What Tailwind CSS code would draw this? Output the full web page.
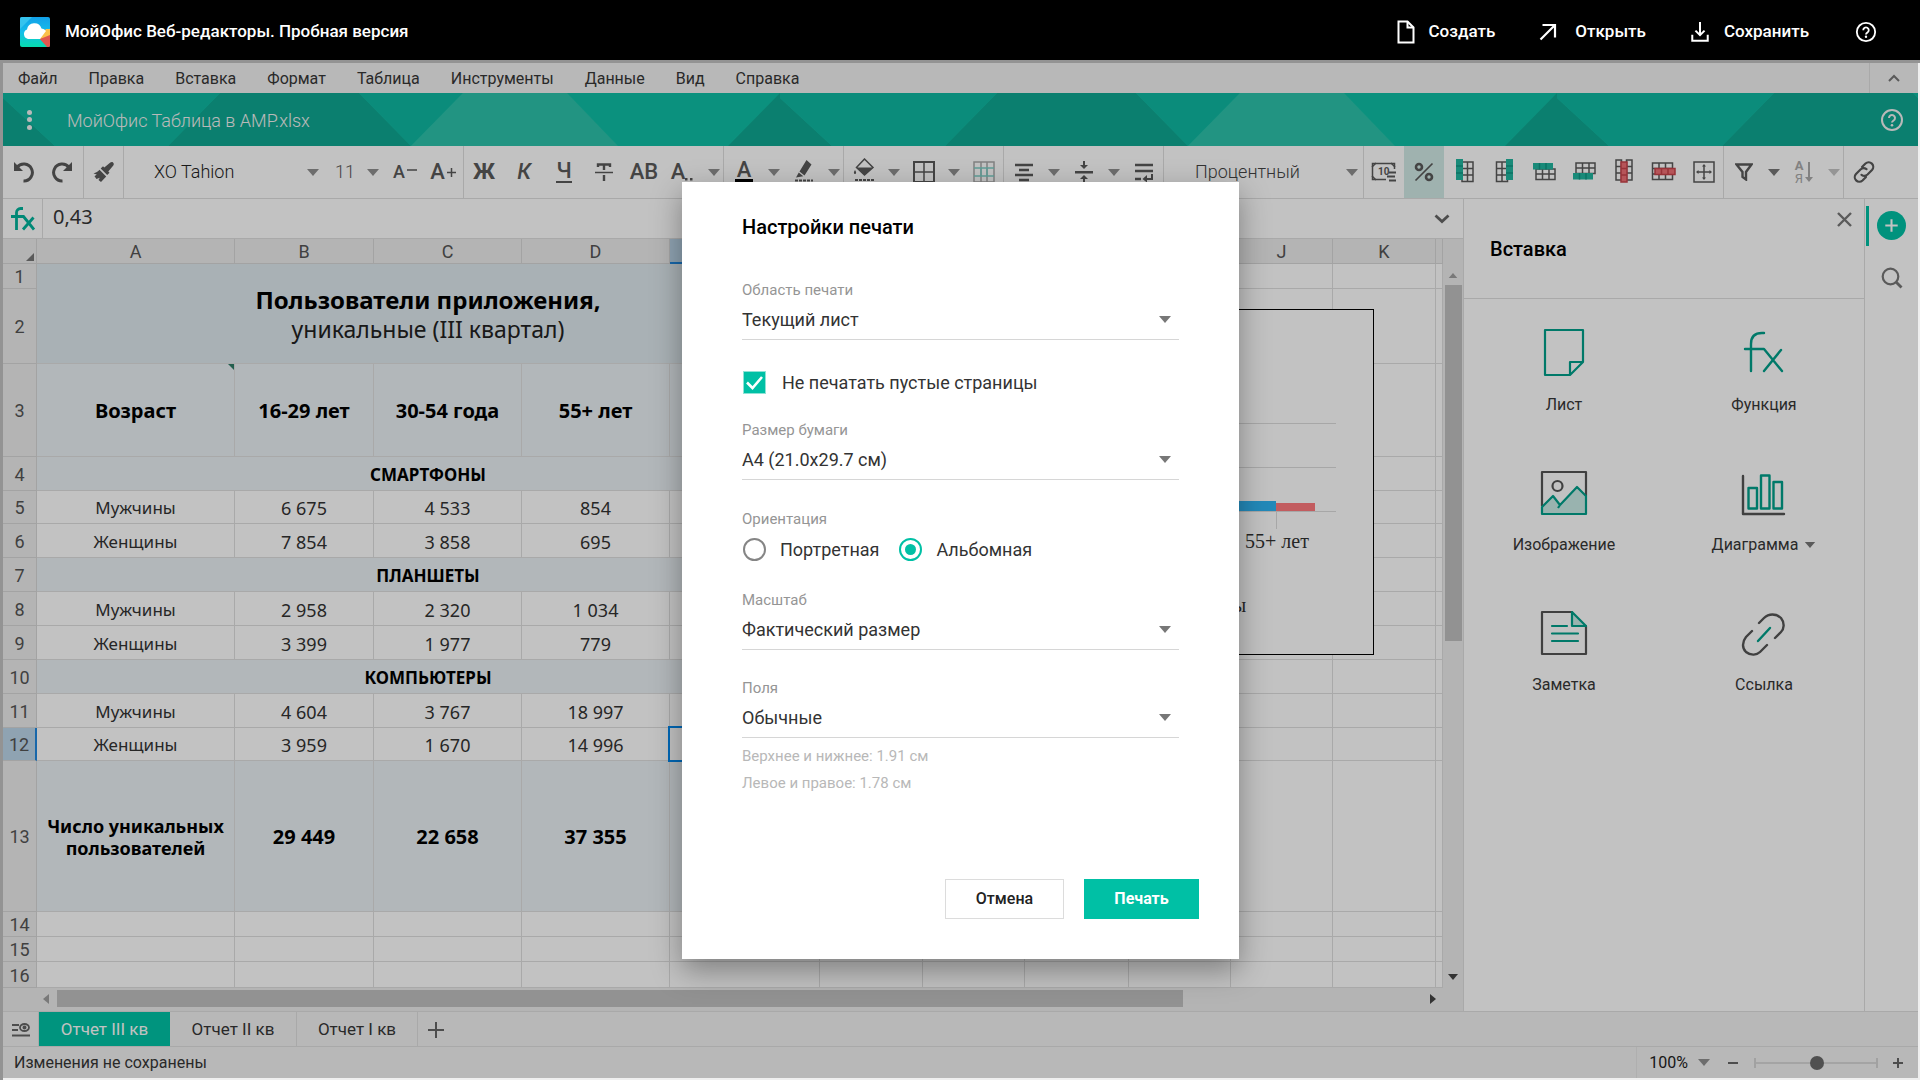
<!DOCTYPE html>
<html lang="ru">
<head>
<meta charset="utf-8">
<meta name="viewport" content="width=device-width, initial-scale=1">
<title>МойОфис Таблица в AMP.xlsx</title>
<script src="https://cdn.jsdelivr.net/npm/@tailwindcss/browser@4"></script>
</head>
<body class="flex min-h-screen flex-col bg-[#efefef] font-[Roboto,sans-serif] text-[#373737]">

<!-- Shared icons -->
<svg class="hidden" aria-hidden="true">
  <symbol id="caret" viewBox="0 0 12 7"><path d="M0 0h12L6 7z" fill="currentColor"/></symbol>
  <symbol id="help" viewBox="0 0 24 24"><circle cx="12" cy="12" r="10" fill="none" stroke="currentColor" stroke-width="2"/><path d="M9 10a3 3 0 1 1 4.600 2.500c-1 .7-1.600 1.100-1.600 2.100" fill="none" stroke="currentColor" stroke-width="2"/><circle cx="12" cy="17.200" r="1.300" fill="currentColor"/></symbol>
</svg>

<header class="flex h-[60px] items-center bg-black px-5 pt-1 text-white">
  <svg class="size-[30px]" viewBox="0 0 30 30" aria-hidden="true">
    <defs>
      <linearGradient id="lg" x1="0" y1="0" x2="0" y2="1"><stop offset="0" stop-color="#12a0e8"/><stop offset=".5" stop-color="#15bdea"/><stop offset="1" stop-color="#06dcae"/></linearGradient>
      <clipPath id="lc"><rect width="30" height="30" rx="2"/></clipPath>
    </defs>
    <g clip-path="url(#lc)"><rect width="30" height="30" fill="url(#lg)"/><path d="M0 0h12L0 12z" fill="#35c3ee"/><path d="M30 14v16h-3l-7-8z" fill="#e0574f"/><path d="M30 12v8l-10 2v-4l6-6z" fill="#fbc04a"/><path d="M30 18v12h-2l-8-8z" fill="#e0574f"/></g>
    <path d="M8 22a5 5 0 0 1-1-9.500 7.500 7.500 0 0 1 14.500-1A5.500 5.500 0 0 1 26 14l-6 8z" fill="#fff"/>
  </svg>
  <h1 class="ml-[15px] text-[17px] font-medium">МойОфис Веб-редакторы. Пробная версия</h1>
  <nav class="ml-auto flex items-center text-[17px] font-medium">
    <button class="flex items-center gap-3.5"><svg class="h-6 w-[18px]" viewBox="0 0 18 24" fill="none" stroke="#fff" stroke-width="2"><path d="M1.500 1.500h9l6 6V22.500h-15z"/><path d="M10.500 1.500v6h6"/></svg>Создать</button>
    <button class="ml-11 flex items-center gap-[18px]"><svg class="size-[18px]" viewBox="0 0 18 18" fill="none" stroke="#fff" stroke-width="2.200"><path d="M1.500 16.500 16 2M3.500 2H16v12.500"/></svg>Открыть</button>
    <button class="ml-11 flex items-center gap-3.5"><svg class="size-5" viewBox="0 0 20 22" fill="none" stroke="#fff" stroke-width="2.200"><path d="M1.500 14v6.500h17V14M10 0v14M5 9.500l5 5 5-5"/></svg>Сохранить</button>
    <button class="mr-[23px] ml-[46px]" aria-label="Помощь"><svg class="size-[22px]"><use href="#help"/></svg></button>
  </nav>
</header>

<div class="flex flex-1 flex-col border-t-3 border-l-3 border-[#939393] pr-0.5 pb-0.5">
<div class="relative flex flex-1 flex-col bg-white">

  <!-- Menu bar -->
  <div class="flex h-[30px] items-stretch bg-[#f2f2f2] text-[16px]">
    <nav class="flex items-center gap-px pt-0.5">
      <button class="px-[15px]">Файл</button><button class="px-[15px]">Правка</button><button class="px-[15px]">Вставка</button><button class="px-[15px]">Формат</button><button class="px-[15px]">Таблица</button><button class="px-[15px]">Инструменты</button><button class="px-[15px]">Данные</button><button class="px-[15px]">Вид</button><button class="px-[15px]">Справка</button>
    </nav>
    <button class="ml-auto flex w-[49px] items-center justify-center border-l border-[#dedede]" aria-label="Свернуть меню"><svg class="h-2 w-3.5" viewBox="0 0 14 8" fill="none" stroke="#777" stroke-width="2"><path d="m2 7 5-5 5 5"/></svg></button>
  </div>

  <!-- Document title -->
  <div class="relative flex h-[53px] items-center bg-[#0fbfa6] text-[#f4f4f4]">
    <svg class="absolute inset-0 h-full w-full" aria-hidden="true">
      <defs><pattern id="tri" width="777" height="53" patternUnits="userSpaceOnUse">
        <path d="M0 5 52 53H0zM217 0H356L408 53H165z" fill="#0fa892"/><path d="M0 0H217L165 53H52L0 5z" fill="#0fb9a2"/><path d="M356 0H460L408 53z" fill="#0fb9a2"/><path d="M460 0H564L615 53H408z" fill="#2dc3ab"/><path d="M777 0V53H725z" fill="#0fa892"/>
      </pattern></defs>
      <rect width="100%" height="100%" fill="url(#tri)"/>
    </svg>
    <button class="relative ml-5 flex h-6 w-3 flex-col items-center justify-between py-0.5" aria-label="Меню документа"><span class="size-[5px] rounded-full bg-current"></span><span class="size-[5px] rounded-full bg-current"></span><span class="size-[5px] rounded-full bg-current"></span></button>
    <span class="relative ml-8 pt-0.5 text-[18px] font-light">МойОфис Таблица в AMP.xlsx</span>
    <button class="relative mr-3.5 ml-auto" aria-label="Справка"><svg class="size-6"><use href="#help"/></svg></button>
  </div>

  <!-- Toolbar -->
  <div class="flex h-[53px] items-stretch overflow-hidden border-b border-[#dedede] text-[22px] leading-none text-[#5a5a5a] [&_button]:flex [&_button]:h-full [&_button]:shrink-0 [&_button]:items-center [&_button]:justify-center [&>div]:flex [&>div]:shrink-0 [&>div]:items-center [&>div]:border-r [&>div]:border-[#dedede]">
    <div class="w-[81px]">
      <button class="w-10" aria-label="Отменить"><svg class="size-6" viewBox="0 0 24 24"><path d="M6 7.500A8.500 8.500 0 1 1 12.500 21" fill="none" stroke="currentColor" stroke-width="3"/><path d="M3 2v9h9z" fill="currentColor"/></svg></button>
      <button class="w-10" aria-label="Повторить"><svg class="size-6" viewBox="0 0 24 24"><path d="M18 7.500A8.500 8.500 0 1 0 11.500 21" fill="none" stroke="currentColor" stroke-width="3"/><path d="M21 2v9h-9z" fill="currentColor"/></svg></button>
    </div>
    <div class="w-10"><button class="w-10" aria-label="Копировать формат"><svg class="size-6" viewBox="0 0 24 24" fill="currentColor"><path d="M21 2.500c1 .8 1 2 .3 2.900l-5 6.200 1.200 1.200-2.300 2.300-6.500-6.500 2.300-2.300 1.300 1.300 6-5c.9-.7 1.900-.9 2.700-.1zM7.500 9.700l6.700 6.700L9 22l-2.500-2 1.300-2.300L4.500 19l-2-2.800 2.300-1.800-3.300-.9C4 12.700 6 11.500 7.500 9.700z"/></svg></button></div>
    <div class="w-[340px] justify-end">
      <div class="relative flex items-center">
        <select class="w-[169px] appearance-none text-[18px] font-light text-[#222]" aria-label="Шрифт"><option>XO Tahion</option></select>
        <svg class="pointer-events-none absolute right-1 h-[7px] w-3 text-[#909090]"><use href="#caret"/></svg>
      </div>
      <div class="relative ml-3 flex items-center">
        <select class="w-12 appearance-none text-[18px] font-light" aria-label="Размер шрифта"><option>11</option></select>
        <svg class="pointer-events-none absolute right-1 h-[7px] w-3 text-[#909090]"><use href="#caret"/></svg>
      </div>
      <button class="w-10 gap-0.5 pl-1 text-[18px] font-medium" aria-label="Уменьшить шрифт">A<svg class="h-5 w-2.5" viewBox="0 0 10 20" stroke="currentColor" stroke-width="1.500"><path d="M0 8h10"/></svg></button>
      <button class="w-10 gap-0.5 font-medium" aria-label="Увеличить шрифт">A<svg class="size-[9px]" viewBox="0 0 9 9" stroke="currentColor" stroke-width="1.500"><path d="M0 4.500h9M4.500 0v9"/></svg></button>
    </div>
    <div class="w-[260px]">
      <button class="w-10 font-bold">Ж</button>
      <button class="w-10 font-medium italic">К</button>
      <button class="w-10 font-medium"><span class="border-b-2 leading-5">Ч</span></button>
      <button class="w-10" aria-label="Зачёркнутый"><svg class="size-5" viewBox="0 0 20 20" fill="none" stroke="currentColor"><path d="M4 5V2.500h12V5M10 2v6M10 13v6" stroke-width="2.400"/><path d="M1 10.500h18" stroke-width="1.500"/></svg></button>
      <button class="w-10 font-medium">AB</button>
      <button class="w-10 pr-1 font-medium" aria-label="Ещё">A<svg class="h-[18px] w-2" viewBox="0 0 8 18" fill="currentColor"><path d="M0 15h2.500v2.500H0zM5 15h2.500v2.500H5z"/></svg></button>
      <button class="w-5 text-[#909090]" aria-label="Параметры текста"><svg class="h-[7px] w-3"><use href="#caret"/></svg></button>
    </div>
    <div class="w-[120px]">
      <button class="w-10" aria-label="Цвет текста"><span class="border-b-5 border-black px-0.5 font-medium leading-[18px]">A</span></button>
      <button class="w-5 text-[#909090]" aria-label="Выбор цвета текста"><svg class="h-[7px] w-3"><use href="#caret"/></svg></button>
      <button class="w-10" aria-label="Выделение цветом"><svg class="size-6" viewBox="0 0 24 24" fill="currentColor"><path d="m14.500 0 5 4.500-7 11-5-4zM6.800 12.500l4.500 3.700L4 17.500z"/><path d="M3 20.500h18" stroke="currentColor" stroke-width="2" stroke-dasharray="3 1"/></svg></button>
      <button class="w-5 text-[#909090]" aria-label="Цвет выделения"><svg class="h-[7px] w-3"><use href="#caret"/></svg></button>
    </div>
    <div class="w-[160px]">
      <button class="w-10" aria-label="Заливка"><svg class="h-7 w-6" viewBox="0 0 24 28"><path d="M12.500 1 21 9.500l-8.500 7.500L4.500 9.500z" fill="none" stroke="currentColor" stroke-width="1.500"/><path d="M4.500 9.500H21L12.500 17zM3 12c1.500 2 1.500 4 0 4s-1.500-2 0-4z" fill="currentColor"/><path d="M3 22h19" stroke="currentColor" stroke-width="2" stroke-dasharray="3 1"/></svg></button>
      <button class="w-5 text-[#909090]" aria-label="Цвет заливки"><svg class="h-[7px] w-3"><use href="#caret"/></svg></button>
      <button class="w-10" aria-label="Границы"><svg class="size-[22px]" viewBox="0 0 22 22" fill="none" stroke="currentColor"><path d="M1 1h20v20H1z" stroke-width="2"/><path d="M11 1v20M1 11h20" stroke-width="1.500"/></svg></button>
      <button class="w-5 text-[#909090]" aria-label="Вид границ"><svg class="h-[7px] w-3"><use href="#caret"/></svg></button>
      <button class="w-10" aria-label="Стиль таблицы"><svg class="size-[22px]" viewBox="0 0 22 22" fill="none" stroke-width="1.500"><path d="M1 1h20v20H1zM8 1v20M14 1v20" stroke="#aaa"/><path d="M1 7h20M1 15h20M8 7v8M14 7v8" stroke="#7fd0c6"/></svg></button>
    </div>
    <div class="w-[160px]">
      <button class="w-10" aria-label="Выравнивание по горизонтали"><svg class="size-5" viewBox="0 0 20 20" stroke="currentColor" stroke-width="2.500"><path d="M1 3h18M5 8h10M1 13h18M5 18h10"/></svg></button>
      <button class="w-5 text-[#909090]" aria-label="Варианты выравнивания"><svg class="h-[7px] w-3"><use href="#caret"/></svg></button>
      <button class="w-10" aria-label="Выравнивание по вертикали"><svg class="size-[22px]" viewBox="0 0 22 22" fill="currentColor"><path d="M2 10h18v2.500H2zM10 0h2v4h3l-4 4-4-4h3zM10 22h2v-4h3l-4-4-4 4h3z"/></svg></button>
      <button class="w-5 text-[#909090]" aria-label="Варианты выравнивания по вертикали"><svg class="h-[7px] w-3"><use href="#caret"/></svg></button>
      <button class="w-10" aria-label="Перенос текста"><svg class="size-5" viewBox="0 0 20 20" fill="none" stroke="currentColor" stroke-width="2.500"><path d="M1 3h18M1 9h18M1 17h6"/><path d="M18 12v5h-6" stroke-width="2"/><path d="m13 13-4.500 4 4.500 3.500z" fill="currentColor" stroke="none"/></svg></button>
    </div>
    <div class="w-[200px]">
      <div class="relative flex w-full items-center pl-[31px]">
        <select class="w-full appearance-none text-[18px] font-light text-[#444]" aria-label="Формат числа"><option>Процентный</option></select>
        <svg class="pointer-events-none absolute right-[5px] h-[7px] w-3 text-[#909090]"><use href="#caret"/></svg>
      </div>
    </div>
    <div class="w-[360px]">
      <button class="w-10" aria-label="Денежный формат"><svg class="h-5 w-[26px] overflow-visible" viewBox="0 0 26 20" fill="none" stroke="currentColor" stroke-width="1.500"><path d="M15 17.500H1.500v-16h22V7"/><path d="M1 5l4-4M20 1l4 4M1 14l4 4" /><text x="7" y="13" font-size="10" font-weight="700" fill="currentColor" stroke="none" font-family="Roboto">10</text><path d="M18 10.500h7M16 14.500h8M18 18.500h7" stroke-width="2.200"/></svg></button>
      <button class="w-10 bg-[#d2eae6]" aria-label="Процентный формат"><svg class="size-5" viewBox="0 0 20 20" fill="none" stroke="currentColor"><circle cx="5" cy="5" r="3" stroke-width="2.600"/><circle cx="15" cy="15" r="3" stroke-width="2.600"/><path d="M18.500 1.500 1.500 18.500" stroke-width="1.700"/></svg></button>
      <button class="w-10" aria-label="Столбец слева"><svg class="size-7" viewBox="0 0 28 28" fill="none" stroke="currentColor" stroke-width="1.500"><path d="M12 4h11v19.500H12zM17.500 4v19.500M12 10.500h11M12 17h11"/><path d="M6 1h7v21H6z" fill="#22b6a0" stroke="none"/><path d="M6 8h7M6 15h7" stroke="#109684"/></svg></button>
      <button class="w-10" aria-label="Столбец справа"><svg class="size-7" viewBox="0 0 28 28" fill="none" stroke="currentColor" stroke-width="1.500"><path d="M6.500 4h11v19.500h-11zM12 4v19.500M6.500 10.500h11M6.500 17h11"/><path d="M16 1h7v21h-7z" fill="#22b6a0" stroke="none"/><path d="M16 8h7M16 15h7" stroke="#109684"/></svg></button>
      <button class="w-10" aria-label="Строка сверху"><svg class="size-7" viewBox="0 0 28 28" fill="none" stroke="currentColor" stroke-width="1.500"><path d="M6 11h19v10.500H6zM6 16h19M12.500 11v10.500M19 11v10.500"/><path d="M3 5h20v6.500H3z" fill="#22b6a0" stroke="none"/><path d="M9.500 5v6.500M16 5v6.500" stroke="#109684"/></svg></button>
      <button class="w-10" aria-label="Строка снизу"><svg class="size-7" viewBox="0 0 28 28" fill="none" stroke="currentColor" stroke-width="1.500"><path d="M6 5h19v10.500H6zM6 10h19M12.500 5v10.500M19 5v10.500"/><path d="M3 15h20v6.500H3z" fill="#22b6a0" stroke="none"/><path d="M9.500 15v6.500M16 15v6.500" stroke="#109684"/></svg></button>
      <button class="w-10" aria-label="Удалить столбец"><svg class="size-7" viewBox="0 0 28 28" fill="none" stroke="currentColor" stroke-width="1.500"><path d="M6 2h5.500v20H6zM16.500 2H22v20h-5.500zM6 8.500h16M6 15h16"/><path d="M11 4h6v20h-6z" fill="#ef7076" stroke="#c8434b"/><path d="M11 10.500h6M11 17h6" stroke="#c8434b"/></svg></button>
      <button class="w-10" aria-label="Удалить строку"><svg class="size-7" viewBox="0 0 28 28" fill="none" stroke="currentColor" stroke-width="1.500"><path d="M2.500 5h20v5.500h-20zM2.500 16h20v5.500h-20zM2.500 10v6M9 5v16.500M15.500 5v16.500"/><path d="M5 10.500h20v6H5z" fill="#ef7076" stroke="#c8434b"/><path d="M11.500 10.500v6M18 10.500v6" stroke="#c8434b"/></svg></button>
      <button class="w-10" aria-label="Объединить ячейки"><svg class="size-[22px]" viewBox="0 0 22 22" fill="none" stroke="currentColor" stroke-width="1.500"><path d="M1 1h20v20H1zM11 4.500v13M4.500 11h13"/><path d="m9 5.500 2-2.500 2 2.500zM9 16.500l2 2.500 2-2.500zM5.500 9 3 11l2.500 2zM16.500 9l2.500 2-2.500 2z" fill="currentColor" stroke="none"/></svg></button>
    </div>
    <div class="w-[120px]">
      <button class="w-10" aria-label="Фильтр"><svg class="size-[18px]" viewBox="0 0 18 18" fill="none" stroke="currentColor" stroke-width="2.400"><path d="M1.500 1.500h15L11 9v7.500L7.500 14V9z"/></svg></button>
      <button class="w-5 text-[#777]" aria-label="Параметры фильтра"><svg class="h-[7px] w-3"><use href="#caret"/></svg></button>
      <button class="w-10 gap-0.5 text-[#aaa]" aria-label="Сортировка"><span class="flex flex-col items-center text-[13px] leading-[13px]"><b>А</b><span>Я</span></span><svg class="h-5 w-2" viewBox="0 0 8 20" fill="currentColor"><path d="M3 0h2v15h3l-4 5-4-5h3z"/></svg></button>
      <button class="w-5 text-[#c4c4c4]" aria-label="Параметры сортировки"><svg class="h-[7px] w-3"><use href="#caret"/></svg></button>
    </div>
    <button class="w-10" aria-label="Ссылка"><svg class="size-6" viewBox="0 0 24 24" fill="none" stroke="currentColor" stroke-width="2.200" stroke-linecap="round"><path d="m10 7 3.500-3.500a4.600 4.600 0 0 1 6.500 6.500l-4.500 4.500a4.600 4.600 0 0 1-6 .3M14 17l-3.500 3.500A4.600 4.600 0 0 1 4 14l4.500-4.500a4.600 4.600 0 0 1 6-.3"/></svg></button>
  </div>

  <!-- Sheet and side panel -->
  <div class="flex flex-1 items-stretch">
    <div class="flex min-w-0 flex-1 flex-col border-r border-[#dedede]">
      <div class="flex h-10 items-stretch border-b border-[#dedede]">
        <button class="flex w-10 items-center justify-center border-r border-[#dedede]" aria-label="Вставить функцию"><svg class="ml-px h-6 w-6" viewBox="0 0 24 24" fill="none" stroke="#00b39b" stroke-width="2.800"><path d="M12 1.500H9.500a4 4 0 0 0-4 4V23M0 9.500h12.500L23 22.500M22.500 10.500 12 22.500"/></svg></button>
        <input class="min-w-0 flex-1 bg-transparent px-2.5 pb-1 font-['Noto_Sans',sans-serif] text-[20px] leading-6 outline-none" aria-label="Значение ячейки" value="0,43">
        <button class="flex w-11 items-center justify-center" aria-label="Развернуть строку формул"><svg class="ml-0.5 h-2.5 w-4" viewBox="0 0 16 10" fill="none" stroke="#666" stroke-width="2.800"><path d="m1.500 1.500 6.500 6 6.500-6"/></svg></button>
      </div>
      <div class="flex">
        <div class="relative min-w-0 flex-1 overflow-hidden">
          <table class="w-full table-fixed border-separate border-spacing-0 text-center font-['Noto_Sans',sans-serif] text-[18px] leading-[22px] text-[#333] [&_td]:border-r [&_td]:border-b [&_td]:border-[#dedede] [&_td]:p-0 [&_td]:pt-0.5 [&_th]:border-r [&_th]:border-b [&_th]:border-[#d6d6d6] [&_th]:bg-[#ededed] [&_th]:p-0 [&_th]:pt-0.5 [&_th]:font-[Roboto] [&_th]:text-[18px] [&_th]:font-normal [&_th]:text-[#555]">
            <colgroup><col class="w-[34px]"><col class="w-[198px]"><col class="w-[139px]"><col class="w-[148px]"><col class="w-[148px]"><col class="w-[150px]"><col class="w-[103px]"><col class="w-[102px]"><col class="w-[104px]"><col class="w-[102px]"><col class="w-[102px]"><col class="w-[103px]"><col></colgroup>
            <thead><tr class="h-[25px]"><th class="relative"><svg class="absolute right-0.5 bottom-0.5 size-2" viewBox="0 0 8 8"><path d="M8 0v8H0z" fill="#777"/></svg></th><th>A</th><th>B</th><th>C</th><th>D</th><th class="border-b-2! border-b-[#1f88e0]! bg-[#bcd6ea]! pt-0!">E</th><th>F</th><th>G</th><th>H</th><th>I</th><th>J</th><th>K</th><th></th></tr></thead>
            <tbody>
              <tr class="h-[25px]"><th>1</th><td colspan="5" rowspan="2" class="bg-[#dfe9ee] text-[23px] leading-[29px] text-[#222]"><b class="text-[24px] text-black">Пользователи приложения,</b><br>уникальные (III квартал)</td><td></td><td></td><td></td><td></td><td></td><td></td><td></td></tr>
              <tr class="h-[75px]"><th>2</th><td></td><td></td><td></td><td></td><td></td><td></td><td></td></tr>
              <tr class="h-[93px] [&>td:nth-child(-n+6)]:bg-[#eaf1f5] [&>td]:text-[20px] [&>td]:font-bold [&>td]:text-black"><th>3</th><td class="relative">Возраст<svg class="absolute top-0 right-0 size-[6px]" viewBox="0 0 6 6"><path d="M0 0h6v6z" fill="#2f7d68"/></svg></td><td>16-29 лет</td><td>30-54 года</td><td>55+ лет</td><td>Всего</td><td></td><td></td><td></td><td></td><td></td><td></td><td></td></tr>
              <tr class="h-[34px]"><th>4</th><td colspan="5" class="bg-[#eaf1f5] text-[17px] font-bold text-black">СМАРТФОНЫ</td><td></td><td></td><td></td><td></td><td></td><td></td><td></td></tr>
              <tr class="h-[33px]"><th>5</th><td class="text-[17px]">Мужчины</td><td>6 675</td><td>4 533</td><td>854</td><td></td><td></td><td></td><td></td><td></td><td></td><td></td><td></td></tr>
              <tr class="h-[34px]"><th>6</th><td class="text-[17px]">Женщины</td><td>7 854</td><td>3 858</td><td>695</td><td></td><td></td><td></td><td></td><td></td><td></td><td></td><td></td></tr>
              <tr class="h-[34px]"><th>7</th><td colspan="5" class="bg-[#eaf1f5] text-[17px] font-bold text-black">ПЛАНШЕТЫ</td><td></td><td></td><td></td><td></td><td></td><td></td><td></td></tr>
              <tr class="h-[34px]"><th>8</th><td class="text-[17px]">Мужчины</td><td>2 958</td><td>2 320</td><td>1 034</td><td></td><td></td><td></td><td></td><td></td><td></td><td></td><td></td></tr>
              <tr class="h-[34px]"><th>9</th><td class="text-[17px]">Женщины</td><td>3 399</td><td>1 977</td><td>779</td><td></td><td></td><td></td><td></td><td></td><td></td><td></td><td></td></tr>
              <tr class="h-[34px]"><th>10</th><td colspan="5" class="bg-[#eaf1f5] text-[17px] font-bold text-black">КОМПЬЮТЕРЫ</td><td></td><td></td><td></td><td></td><td></td><td></td><td></td></tr>
              <tr class="h-[34px]"><th>11</th><td class="text-[17px]">Мужчины</td><td>4 604</td><td>3 767</td><td>18 997</td><td></td><td></td><td></td><td></td><td></td><td></td><td></td><td></td></tr>
              <tr class="h-[33px]"><th class="border-r-2! border-r-[#1f88e0]! bg-[#bcd6ea]!">12</th><td class="text-[17px]">Женщины</td><td>3 959</td><td>1 670</td><td>14 996</td><td class="relative"><span class="absolute -inset-0.5 border-2 border-[#0088ee]"></span></td><td></td><td></td><td></td><td></td><td></td><td></td><td></td></tr>
              <tr class="h-[151px] [&>td:nth-child(-n+6)]:bg-[#eaf1f5] [&>td]:text-[20px] [&>td]:font-bold [&>td]:text-black"><th>13</th><td class="text-[18px]!">Число уникальных<br>пользователей</td><td>29 449</td><td>22 658</td><td>37 355</td><td></td><td></td><td></td><td></td><td></td><td></td><td></td><td></td></tr>
              <tr class="h-[25px]"><th>14</th><td></td><td></td><td></td><td></td><td></td><td></td><td></td><td></td><td></td><td></td><td></td><td></td></tr>
              <tr class="h-[25px]"><th>15</th><td></td><td></td><td></td><td></td><td></td><td></td><td></td><td></td><td></td><td></td><td></td><td></td></tr>
              <tr class="h-[26px]"><th>16</th><td></td><td></td><td></td><td></td><td></td><td></td><td></td><td></td><td></td><td></td><td></td><td></td></tr>
            </tbody>
          </table>
          <!-- Chart floating over the cells -->
          <svg class="absolute top-[70px] left-[837px] h-[346px] w-[534px] border border-black bg-white" viewBox="0 0 532 344" role="img" aria-label="Диаграмма пользователей по возрасту">
            <path d="M60 113.500h435M60 157.500h435M60 201.500h435M435.500 202v17" stroke="#dcdcdc" fill="none"/>
            <path d="M395 191h40v10h-40z" fill="#2eb5f4"/><path d="M435 193h39v8h-39z" fill="#ff7a7e"/>
            <g font-family="Liberation Serif, serif" font-size="20" fill="#333" text-anchor="middle"><text x="436" y="238">55+ лет</text><text x="350" y="302">Компьютеры</text></g>
          </svg>
        </div>
        <!-- Vertical scroll bar -->
        <div class="flex w-5 flex-col items-center bg-[#ededed]">
          <svg class="mt-[34px] h-[5px] w-2.5 rotate-180 text-[#a0a0a0]"><use href="#caret"/></svg>
          <div class="mt-[7px] h-[356px] w-[17px] bg-[#c0c0c0]"></div>
          <svg class="mt-auto mb-2 h-[6px] w-2.5 text-[#444]"><use href="#caret"/></svg>
        </div>
      </div>
      <!-- Horizontal scroll bar -->
      <div class="flex h-[23px] items-center bg-[#ededed] pr-[27px] pb-0.5">
        <svg class="ml-10 h-2.5 w-[6px]" viewBox="0 0 6 10"><path d="M6 0v10L0 5z" fill="#a0a0a0"/></svg>
        <div class="ml-2 flex h-[17px] flex-1"><div class="w-[82%] bg-[#c0c0c0]"></div></div>
        <svg class="h-2.5 w-[6px]" viewBox="0 0 6 10"><path d="M0 0v10l6-5z" fill="#444"/></svg>
      </div>
    </div>

    <!-- Insert panel -->
    <aside class="w-[401px] shrink-0 border-r border-[#dedede]">
      <div class="relative flex h-[100px] items-center border-b border-[#dedede] pl-[26px]">
        <h2 class="text-[20px] font-medium text-black">Вставка</h2>
        <button class="absolute top-3 right-[11px] p-px" aria-label="Закрыть панель"><svg class="size-[15px]" viewBox="0 0 15 15" stroke="#777" stroke-width="2.400"><path d="m1 1 13 13M14 1 1 14"/></svg></button>
      </div>
      <div class="grid grid-cols-2 text-[16px] [&>button]:flex [&>button]:h-[140px] [&>button]:flex-col [&>button]:items-center [&>button]:pt-[29px] [&_span]:mt-[15px]">
        <button><svg class="size-[50px]" viewBox="0 0 50 50" fill="none" stroke="#00a08a" stroke-width="2.200" stroke-linejoin="round"><path d="M6 2h38v32L31 47H6zM31 47V34h13"/></svg><span>Лист</span></button>
        <button><svg class="size-[50px]" viewBox="0 0 50 50" fill="none" stroke="#00a08a" stroke-width="2.400" stroke-linecap="round" stroke-linejoin="round"><path d="M25 5h-2c-7 0-11 4-11 11v27M6 21h19l18 22M42 22 25 43"/></svg><span>Функция</span></button>
        <button><svg class="size-[50px]" viewBox="0 0 50 50" fill="none" stroke-width="2.200" stroke-linejoin="round"><path d="M3 39 14 28l7 9 17-18 9 9v18H3z" fill="#c9ece7"/><path d="M3 38V4h44v24" stroke="#555"/><circle cx="18.500" cy="18" r="5" stroke="#555"/><path d="M3 39 14 28l7 9 17-18 9 9v18H3zM21 37l-2 3" stroke="#00a08a"/></svg><span>Изображение</span></button>
        <button><svg class="size-[50px]" viewBox="0 0 50 50" fill="none" stroke-width="2.400" stroke-linecap="round" stroke-linejoin="round"><path d="M4 8v38h41" stroke="#555"/><path d="M9.500 20h8.500v20.500H9.500zM22 7.500h8.500v33H22zM34.500 14H43v26.500h-8.500z" stroke="#00a08a"/></svg><span class="flex items-center gap-1.5">Диаграмма<svg class="h-[6px] w-3 text-[#777]"><use href="#caret"/></svg></span></button>
        <button><svg class="size-[50px]" viewBox="0 0 50 50" fill="none" stroke-width="2.200" stroke-linecap="round" stroke-linejoin="round"><path d="M33 4l14 14H33z" fill="#c9ece7"/><path d="M33 4H3v42h44V18" stroke="#555"/><path d="M33 4l14 14H33zM13 18h15M13 25.500h26M13 33h26" stroke="#00a08a"/></svg><span>Заметка</span></button>
        <button><svg class="size-[50px]" viewBox="0 0 50 50" fill="none" stroke-width="2.400" stroke-linecap="round"><path d="m20 15 5-5a12 12 0 0 1 17 0c4 5 3 11 0 14l-6 6M13 23l-6 6c-4 5-4 11 0 15 5 4 11 3 14 0l7-7" stroke="#555"/><path d="M19 33 31 20" stroke="#00a08a"/></svg><span>Ссылка</span></button>
      </div>
    </aside>
    <div class="relative flex w-[53px] shrink-0 flex-col items-center pt-3">
      <span class="absolute top-[7px] left-px h-10 w-[3px] bg-[#00c0a5]"></span>
      <button aria-label="Вставка"><svg class="size-[29px]" viewBox="0 0 28 28"><circle cx="14" cy="14" r="14" fill="#00c0a5"/><path d="M14 8v12M8 14h12" stroke="#fff" stroke-width="2"/></svg></button>
      <button class="mt-[27px]" aria-label="Поиск"><svg class="size-[22px]" viewBox="0 0 22 22" fill="none" stroke="#777" stroke-width="2.200"><circle cx="9.500" cy="9.500" r="7.800"/><path d="m15 15 5.500 5.500" stroke-width="2.800"/></svg></button>
    </div>
  </div>

  <!-- Sheet tabs -->
  <div class="flex h-9 items-stretch border-y border-[#dedede] bg-[#f2f2f2] text-[17px] [&>button]:pt-0.5">
    <button class="flex w-9 items-center justify-center border-r border-[#dedede]" aria-label="Список листов"><svg class="h-[14px] w-[18px]" viewBox="0 0 18 14" fill="none" stroke="#666" stroke-width="2"><path d="M0 2h7M0 7h6M0 12.500h18"/><ellipse cx="12.500" cy="4.500" rx="4.500" ry="3.500" stroke-width="1.800"/><circle cx="12.500" cy="4.500" r="1"/></svg></button>
    <button class="w-[131px] bg-[#00c3a6] text-white">Отчет III кв</button>
    <button class="w-[127px] border-r border-[#dedede]">Отчет II кв</button>
    <button class="w-[121px] border-r border-[#dedede]">Отчет I кв</button>
    <button class="flex w-9 items-center justify-center" aria-label="Добавить лист"><svg class="size-4" viewBox="0 0 16 16" stroke="#666" stroke-width="2"><path d="M8 0v16M0 8h16"/></svg></button>
  </div>

  <!-- Status bar -->
  <div class="flex h-[31px] items-stretch bg-[#f2f2f2] text-[16px]">
    <span class="flex items-center pt-px pl-[11px]">Изменения не сохранены</span>
    <div class="ml-auto flex items-center border-l border-[#e6e6e6] pl-3 text-[#666]">
      <button class="flex items-center gap-2.5 text-[#222]">100%<svg class="h-[7px] w-3 text-[#909090]"><use href="#caret"/></svg></button>
      <button class="ml-[18px]" aria-label="Уменьшить масштаб"><svg class="size-2.5" viewBox="0 0 10 10" stroke="currentColor" stroke-width="2"><path d="M0 5h10"/></svg></button>
      <label class="relative ml-4 flex h-2.5 w-[124px] items-center border-x-2 border-[#d4d4d4]" aria-label="Масштаб листа">
        <span class="absolute inset-x-0 h-0.5 bg-[#d8d8d8]"></span>
        <input type="range" min="0" max="100" value="51" class="relative h-4 w-full appearance-none bg-transparent [&::-webkit-slider-thumb]:size-3.5 [&::-webkit-slider-thumb]:appearance-none [&::-webkit-slider-thumb]:rounded-full [&::-webkit-slider-thumb]:bg-[#6a6a6a]">
      </label>
      <button class="mr-[15px] ml-[15px]" aria-label="Увеличить масштаб"><svg class="size-2.5" viewBox="0 0 10 10" stroke="currentColor" stroke-width="2"><path d="M0 5h10M5 0v10"/></svg></button>
    </div>
  </div>

  <!-- Print settings -->
  <div class="absolute inset-0 flex items-center justify-center bg-black/24">
    <form role="dialog" aria-labelledby="dlg" class="w-[557px] bg-white pt-[31px] pr-10 pb-10 pl-[60px] text-[18px] text-[#333] shadow-[0_11px_28px_rgba(0,0,0,0.35)]">
      <h2 id="dlg" class="h-7 text-[20px] leading-7 font-medium text-black">Настройки печати</h2>
      <div class="mr-5 pt-[39px]">
        <label for="area" class="block h-5 text-[15px] leading-5 text-[#959595]">Область печати</label>
        <div class="relative"><select id="area" class="block h-10 w-full appearance-none border-b border-[#d6d6d6] bg-transparent"><option>Текущий лист</option></select><svg class="pointer-events-none absolute top-4 right-2 h-[7px] w-3 text-[#777]"><use href="#caret"/></svg></div>

        <label class="relative mt-[30px] flex h-6 items-center gap-4 pl-px"><input type="checkbox" checked class="size-[23px] appearance-none border border-[#959595] checked:border-[#8fe3d6] checked:bg-[#00c0a5]"><svg class="pointer-events-none absolute left-1 size-[17px]" viewBox="0 0 17 17" fill="none" stroke="#fff" stroke-width="2.600"><path d="m1 8.500 5.500 5.500L16 3"/></svg>Не печатать пустые страницы</label>

        <label for="paper" class="mt-[26px] block h-5 text-[15px] leading-5 text-[#959595]">Размер бумаги</label>
        <div class="relative"><select id="paper" class="block h-10 w-full appearance-none border-b border-[#d6d6d6] bg-transparent"><option>A4 (21.0x29.7 см)</option></select><svg class="pointer-events-none absolute top-4 right-2 h-[7px] w-3 text-[#777]"><use href="#caret"/></svg></div>

        <fieldset class="mt-[29px]">
          <legend class="h-5 text-[15px] leading-5 text-[#959595]">Ориентация</legend>
          <div class="mt-2 mb-px flex h-6 items-center gap-5">
            <label class="flex items-center gap-3.5 pl-px"><input type="radio" name="orient" class="size-[23px] appearance-none rounded-full border-2 border-[#858585] checked:border-[#00c0a5]">Портретная</label>
            <label class="relative flex items-center gap-3.5"><input type="radio" name="orient" checked class="peer size-[23px] appearance-none rounded-full border-2 border-[#858585] checked:border-[#00c0a5]"><span class="absolute left-[6px] hidden size-[11px] rounded-full bg-[#00c0a5] peer-checked:block"></span>Альбомная</label>
          </div>
        </fieldset>

        <label for="scale" class="mt-7 block h-5 text-[15px] leading-5 text-[#959595]">Масштаб</label>
        <div class="relative"><select id="scale" class="block h-10 w-full appearance-none border-b border-[#d6d6d6] bg-transparent"><option>Фактический размер</option></select><svg class="pointer-events-none absolute top-4 right-2 h-[7px] w-3 text-[#777]"><use href="#caret"/></svg></div>

        <label for="margins" class="mt-7 block h-5 text-[15px] leading-5 text-[#959595]">Поля</label>
        <div class="relative"><select id="margins" class="block h-10 w-full appearance-none border-b border-[#d6d6d6] bg-transparent"><option>Обычные</option></select><svg class="pointer-events-none absolute top-4 right-2 h-[7px] w-3 text-[#777]"><use href="#caret"/></svg></div>
        <p class="mt-[5px] text-[15px] leading-[27px] text-[#b8b8b8]">Верхнее и нижнее: 1.91 см<br>Левое и правое: 1.78 см</p>
      </div>
      <div class="mt-[82px] flex justify-end gap-5 text-[16px]">
        <button type="button" class="h-10 w-[119px] border border-[#dcdcdc] font-medium text-[#222]">Отмена</button>
        <button type="submit" class="h-10 w-[115px] bg-[#00c0a5] font-bold text-white">Печать</button>
      </div>
    </form>
  </div>
</div>
</div>
</body>
</html>
